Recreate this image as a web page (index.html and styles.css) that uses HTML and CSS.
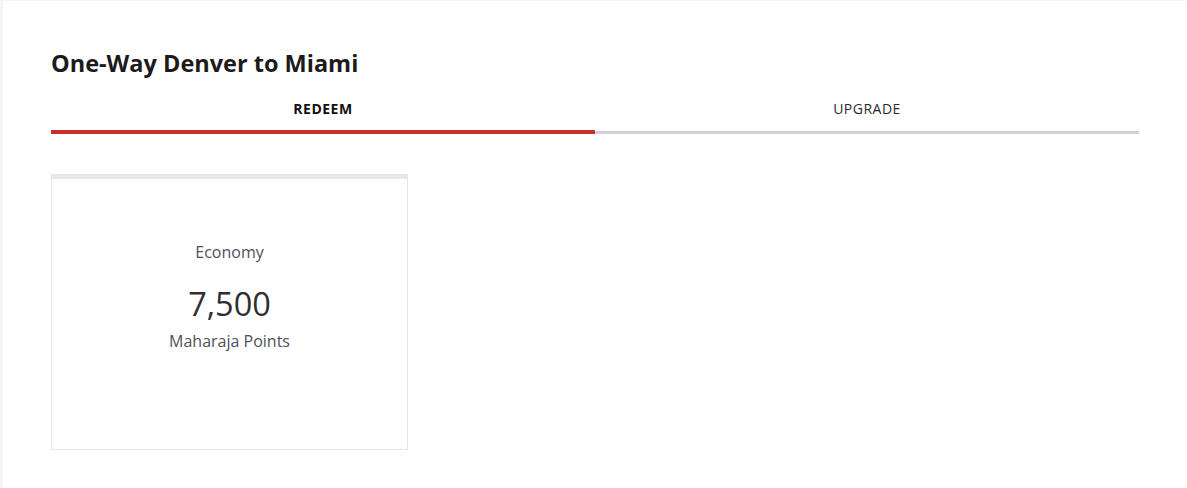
FILE: index.html
```html
<!DOCTYPE html>
<html>
<head>
<meta charset="utf-8">
<link rel="stylesheet" href="styles.css">
</head>
<body>
<div class="page">
  <div class="panel">
    <h1 class="title">One-Way Denver to Miami</h1>
    <div class="tabs">
      <div class="tab active">REDEEM</div>
      <div class="tab">UPGRADE</div>
    </div>
    <div class="cards">
      <div class="card">
        <div class="cabin">Economy</div>
        <div class="points">7,500</div>
        <div class="unit">Maharaja Points</div>
      </div>
    </div>
  </div>
</div>
</body>
</html>
```
FILE: styles.css
```css
html, body {
  margin: 0;
  padding: 0;
  background: #f4f5f6;
}
.page {
  padding: 1px 0 0 3px;
  height: 488px;
  box-sizing: border-box;
}
.panel {
  background: #fff;
  height: 100%;
  padding: 48px 48px 0 48px;
  box-sizing: border-box;
  font-family: "Open Sans", "Noto Sans", sans-serif;
}
.title {
  margin: 0;
  font-size: 23.5px;
  font-weight: 700;
  color: #1c1a1d;
  line-height: 28px;
}
.tabs {
  display: flex;
  margin-top: 23px;
}
.tab {
  flex: 1;
  text-align: center;
  font-size: 14px;
  letter-spacing: 0.5px;
  color: #2b2b2f;
  padding-bottom: 12px;
  line-height: 18px;
  border-bottom: 3px solid #cfd0d8;
}
.tab.active {
  font-weight: 700;
  color: #111;
  border-bottom: 4px solid #c82e2b;
}
.tab:not(.active) {
  padding-bottom: 13px;
}
.cards {
  display: flex;
  margin-top: 40px;
}
.card {
  width: 357px;
  height: 276px;
  box-sizing: border-box;
  border: 1px solid #e6e6e6;
  border-top: 5px solid #e8e8e8;
  display: flex;
  flex-direction: column;
  align-items: center;
  padding-top: 63px;
}
.cabin {
  font-size: 16px;
  color: #4f515b;
  line-height: 20px;
}
.points {
  font-size: 32.5px;
  color: #2f2f33;
  line-height: 36px;
  margin-top: 24px;
}
.unit {
  font-size: 16px;
  color: #4f515b;
  line-height: 20px;
  margin-top: 9px;
}
```
